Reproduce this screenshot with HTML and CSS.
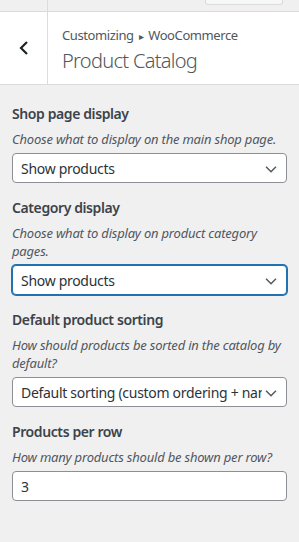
FILE: index.html
```html
<!DOCTYPE html>
<html lang="en">
<head>
    <meta charset="UTF-8" />
    <meta name="viewport" content="width=device-width, initial-scale=1.0" />
    <title>Product Catalog</title>
    <link rel="stylesheet" href="styles.css">
</head>
<body>
    <div class="topbar">
        <div class="topbar-left"></div>
        <div class="topbar-btn"></div>
    </div>

    <div class="header">
        <button class="back" type="button" aria-label="Back">
            <svg viewBox="0 0 12 16" width="12" height="16">
                <path d="M9 2 L3 8 L9 14" />
            </svg>
        </button>
        <div class="titles">
            <div class="crumb">Customizing <span class="sep">&#9656;</span> WooCommerce</div>
            <h3 class="title">Product Catalog</h3>
        </div>
    </div>

    <div class="content">
        <div class="control">
            <label class="control-title" for="shop-display">Shop page display</label>
            <span class="desc">Choose what to display on the main shop page.</span>
            <select id="shop-display" class="field">
                <option>Show products</option>
                <option>Show categories</option>
                <option>Show categories &amp; products</option>
            </select>
        </div>

        <div class="control">
            <label class="control-title" for="cat-display">Category display</label>
            <span class="desc">Choose what to display on product category pages.</span>
            <select id="cat-display" class="field focused">
                <option>Show products</option>
                <option>Show subcategories</option>
                <option>Show subcategories &amp; products</option>
            </select>
        </div>

        <div class="control">
            <label class="control-title" for="sorting">Default product sorting</label>
            <span class="desc">How should products be sorted in the catalog by default?</span>
            <select id="sorting" class="field">
                <option>Default sorting (custom ordering + name)</option>
                <option>Popularity (sales)</option>
                <option>Average rating</option>
            </select>
        </div>

        <div class="control">
            <label class="control-title" for="per-row">Products per row</label>
            <span class="desc">How many products should be shown per row?</span>
            <input id="per-row" class="field" type="number" value="3" />
        </div>
    </div>
</body>
</html>
```

FILE: styles.css
```css
body {
    margin: 0;
    background: #f0f0f1;
    font-family: 'Noto Sans', 'Open Sans', sans-serif;
    color: #3c434a;
}

/* top strip with the clipped action bar */
.topbar {
    display: flex;
    height: 11px;
    border-bottom: 1px solid #dcdcde;
}
.topbar-left {
    width: 47px;
    border-right: 1px solid #dcdcde;
}
.topbar-btn {
    margin-left: auto;
    margin-right: 16px;
    width: 76px;
    height: 4px;
    border: 1px solid #dcdcde;
    border-top: none;
    border-radius: 0 0 3px 3px;
    background: #f6f7f7;
}

/* section header */
.header {
    display: flex;
    height: 72px;
    background: #fff;
    border-bottom: 1px solid #dcdcde;
}
.back {
    width: 48px;
    padding: 0;
    border: none;
    border-right: 1px solid #dcdcde;
    background: #fff;
    display: flex;
    align-items: center;
    justify-content: center;
    cursor: pointer;
}
.back svg {
    fill: none;
    stroke: #1d2327;
    stroke-width: 2.2;
}
.titles {
    padding: 13px 0 0 14px;
    color: #50575e;
}
.crumb {
    font-size: 13px;
    line-height: 20px;
    letter-spacing: -0.4px;
}
.crumb .sep {
    font-size: 10px;
    margin: 0 2px;
}
.title {
    margin: 2px 0 0;
    font-size: 20px;
    font-weight: 300;
    line-height: 26px;
    letter-spacing: -0.7px;
}

/* controls */
.content {
    padding: 18px 12px;
}
.control {
    margin-bottom: 14px;
}
.control-title {
    display: block;
    font-size: 14px;
    font-weight: 600;
    line-height: 21px;
    letter-spacing: -0.4px;
    margin-bottom: 6px;
}
.desc {
    display: block;
    font-size: 13px;
    font-style: italic;
    line-height: 18px;
    letter-spacing: -0.2px;
    color: #50575e;
    margin-bottom: 5px;
}
.field {
    display: block;
    box-sizing: border-box;
    width: 100%;
    height: 30px;
    margin: 0;
    padding: 0 24px 0 8px;
    border: 1px solid #8c8f94;
    border-radius: 4px;
    background: #fff;
    font-family: inherit;
    font-size: 14px;
    letter-spacing: -0.3px;
    color: #2c3338;
    outline: none;
}
select.field {
    -webkit-appearance: none;
    appearance: none;
    background: #fff url("data:image/svg+xml,%3Csvg xmlns='http://www.w3.org/2000/svg' width='20' height='20' viewBox='0 0 20 20'%3E%3Cpath d='M4.5 7.5l5.5 5.5 5.5-5.5' fill='none' stroke='%2350575e' stroke-width='1.6'/%3E%3C/svg%3E") no-repeat right 6px top 55%;
    background-size: 18px 18px;
}
.field.focused {
    border-color: #2271b1;
    box-shadow: 0 0 0 1px #2271b1;
}
input.field {
    padding-right: 8px;
}
input.field::-webkit-inner-spin-button {
    -webkit-appearance: none;
}
```
